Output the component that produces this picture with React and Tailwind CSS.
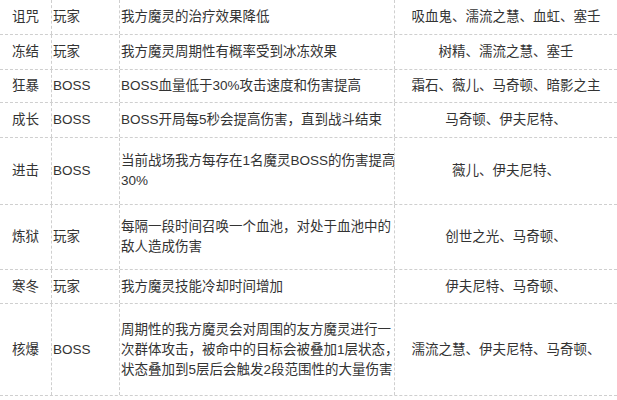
import React from 'react';

const rows = [
  { name: '诅咒', target: '玩家', desc: ['我方魔灵的治疗效果降低'], who: '吸血鬼、濡流之慧、血虹、塞壬', h: 'h-[35px]' },
  { name: '冻结', target: '玩家', desc: ['我方魔灵周期性有概率受到冰冻效果'], who: '树精、濡流之慧、塞壬', h: 'h-[35px]' },
  { name: '狂暴', target: 'BOSS', desc: ['BOSS血量低于30%攻击速度和伤害提高'], who: '霜石、薇儿、马奇顿、暗影之主', h: 'h-[33px]' },
  { name: '成长', target: 'BOSS', desc: ['BOSS开局每5秒会提高伤害，直到战斗结束'], who: '马奇顿、伊夫尼特、', h: 'h-[35px]' },
  { name: '进击', target: 'BOSS', desc: ['当前战场我方每存在1名魔灵BOSS的伤害提高', '30%'], who: '薇儿、伊夫尼特、', h: 'h-[67px]' },
  { name: '炼狱', target: '玩家', desc: ['每隔一段时间召唤一个血池，对处于血池中的', '敌人造成伤害'], who: '创世之光、马奇顿、', h: 'h-[65px]' },
  { name: '寒冬', target: '玩家', desc: ['我方魔灵技能冷却时间增加'], who: '伊夫尼特、马奇顿、', h: 'h-[34px]' },
  {
    name: '核爆',
    target: 'BOSS',
    desc: [
      '周期性的我方魔灵会对周围的友方魔灵进行一',
      '次群体攻击，被命中的目标会被叠加1层状态，',
      '状态叠加到5层后会触发2段范围性的大量伤害',
    ],
    who: '濡流之慧、伊夫尼特、马奇顿、',
    h: 'h-[92px]',
  },
];

export default function App() {
  return (
    <div
      className="w-[617px] h-[400px] bg-white overflow-hidden text-[13.5px] leading-[20px] text-[#333]"
      style={{ fontFamily: '"Liberation Sans", "Noto Sans CJK SC", sans-serif' }}
    >
      {rows.map((r) => (
        <div
          key={r.name}
          className={`grid grid-cols-[51px_68px_275px_1fr] border-b border-dashed border-[#cfcfcf] ${r.h}`}
        >
          <div className="flex items-center justify-center">{r.name}</div>
          <div className="flex items-center pl-px border-l border-dashed border-[#cfcfcf]">{r.target}</div>
          <div className="flex flex-col justify-center pl-px border-l border-dashed border-[#cfcfcf] whitespace-nowrap">
            {r.desc.map((line, i) => (
              <span key={i}>{line}</span>
            ))}
          </div>
          <div className="flex items-center justify-center border-l border-dashed border-[#cfcfcf]">{r.who}</div>
        </div>
      ))}
    </div>
  );
}
